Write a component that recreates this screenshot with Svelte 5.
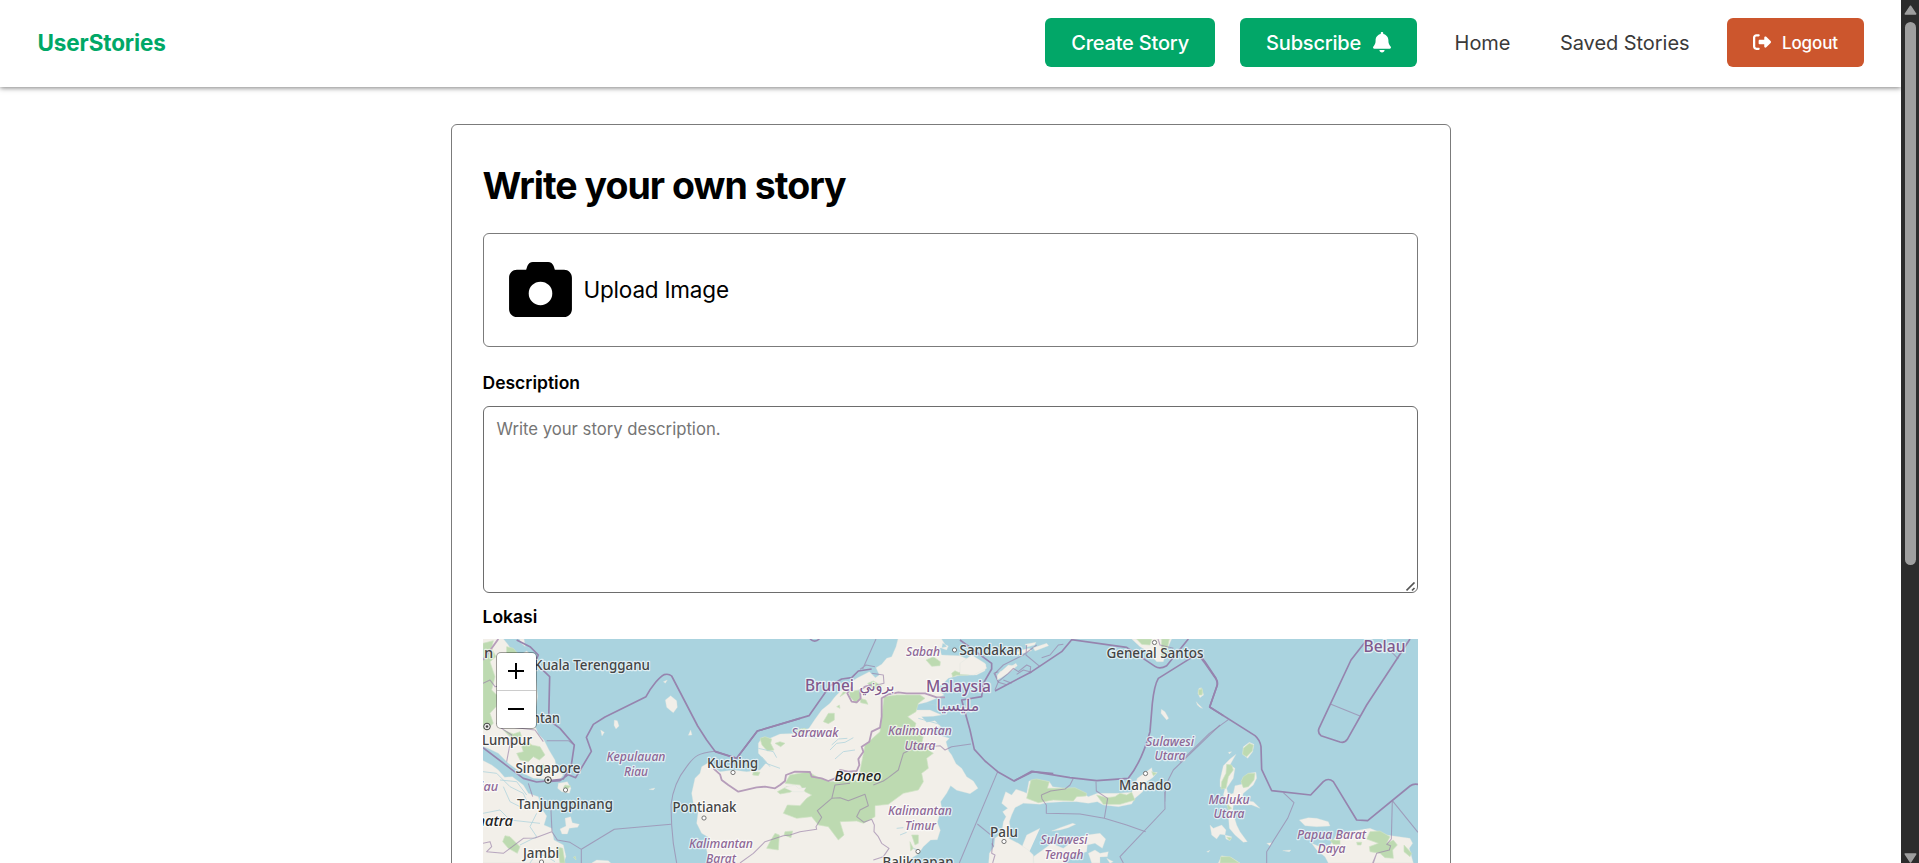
<script>
  const cities = [
    ['n', 484, 657.5, 0, 'start'], ['Kuala Terengganu', 534, 670, 116, 'start'], ['Kuantan', 560, 723, 51, 'end'],
    ['Lumpur', 482, 745, 50, 'start'], ['Singapore', 515.5, 772.5, 65, 'start'], ['Tanjungpinang', 517, 808.5, 96, 'start'],
    ['Jambi', 523, 858, 36, 'start'], ['Kuching', 707, 767.5, 51, 'start'], ['Pontianak', 672.5, 812, 64, 'start'],
    ['Sandakan', 959.5, 655, 63, 'start'], ['Balikpapan', 882.5, 867, 71, 'start'], ['General Santos', 1106.5, 658, 97, 'start'],
    ['Manado', 1119, 790, 52.5, 'start'], ['Palu', 990, 837, 28, 'start']
  ];
  const regions = [
    ['Kepulauan', 636, 761, 59], ['Riau', 636, 776, 24], ['iau', 489, 791, 18], ['Sarawak', 815, 737, 47], ['Sabah', 923, 655.5, 34],
    ['Kalimantan', 920, 735, 64], ['Utara', 920, 750, 31], ['Kalimantan', 920, 815, 64], ['Timur', 920.5, 829.5, 31],
    ['Kalimantan', 721, 848, 64], ['Barat', 721, 863, 30], ['Sulawesi', 1170, 745.5, 48], ['Utara', 1170, 760, 31],
    ['Sulawesi', 1064, 843.5, 47], ['Tengah', 1064, 858.5, 39], ['Maluku', 1229, 803.5, 41], ['Utara', 1229, 818, 31],
    ['Papua Barat', 1331.5, 838.5, 69], ['Daya', 1331.5, 853, 28]
  ];
  const countries = [
    ['Brunei', 829.5, 691, 49], ['بروني', 877, 691, 35], ['Malaysia', 958.5, 692, 65], ['مليسيا', 958, 711, 43], ['Belau', 1384.5, 651.5, 42]
  ];
  const dots = [[565.5, 790], [733, 772.5], [704, 818], [541.5, 862], [954.5, 650], [918, 851.5], [1154.5, 642.5], [1145.5, 773.5], [1004, 841.5]];
</script>

<div class="page">
  <div class="content">
    <header>
      <a class="brand" href="#/">UserStories</a>
      <nav>
        <button class="btn create">Create Story</button>
        <button class="btn subscribe">Subscribe
          <svg viewBox="0 0 448 512" width="18" height="20.5"><path fill="currentColor" d="M224 0c-17.700 0-32 14.300-32 32v19.200C119 66 64 130.600 64 208v18.800c0 47-17.300 92.400-48.500 127.600l-7.400 8.300c-8.400 9.400-10.400 22.900-5.300 34.400S19.400 416 32 416h384c12.600 0 24-7.400 29.200-18.900s3.100-25-5.300-34.400l-7.400-8.300C401.300 319.200 384 273.900 384 226.800V208c0-77.400-55-142-128-156.800V32c0-17.700-14.300-32-32-32zm45.300 493.300c12-12 18.700-28.300 18.700-45.300H160c0 17 6.700 33.300 18.700 45.300S207 512 224 512s33.300-6.700 45.300-18.700z"/></svg>
        </button>
        <a class="link home" href="#/">Home</a>
        <a class="link saved" href="#/saved">Saved Stories</a>
        <button class="btn logout">
          <svg viewBox="0 0 512 512" width="18" height="18"><path fill="currentColor" d="M377.900 105.900 500.700 228.700c7.200 7.200 11.300 17.100 11.300 27.300s-4.100 20.100-11.300 27.300L377.900 406.100c-6.400 6.400-15 9.900-24 9.900-18.700 0-33.900-15.200-33.900-33.900V320H192c-17.700 0-32-14.300-32-32v-64c0-17.700 14.300-32 32-32h128v-62.100c0-18.700 15.200-33.900 33.900-33.900 9 0 17.600 3.600 24 9.900zM160 96H96c-17.700 0-32 14.300-32 32v256c0 17.700 14.300 32 32 32h64c17.700 0 32 14.300 32 32s-14.300 32-32 32H96c-53 0-96-43-96-96V128C0 75 43 32 96 32h64c17.700 0 32 14.300 32 32s-14.300 32-32 32z"/></svg>
          Logout
        </button>
      </nav>
    </header>

    <main>
      <h1>Write your own story</h1>
      <button class="upload">
        <svg viewBox="0 0 512 448" width="63" height="55"><path fill-rule="evenodd" d="M149 33 139 64H64C29 64 0 93 0 128v256c0 35 29 64 64 64h384c35 0 64-29 64-64V128c0-35-29-64-64-64h-75l-10-31C356 13 338 0 318 0H194c-20 0-38 13-45 33zM256 160a96 96 0 1 1 0 192 96 96 0 1 1 0-192z"/></svg>
        <span>Upload Image</span>
      </button>
      <label class="desc" for="description">Description</label>
      <div class="field">
        <textarea id="description" placeholder="Write your story description."></textarea>
        <svg class="grip" viewBox="0 0 10 10" width="10" height="10"><path d="M.5 8.500 8.500.5M6 8.500l2.500-2.500" stroke="#555" stroke-width="1.700"/></svg>
      </div>
      <span class="label">Lokasi</span>
      <div class="map">
        <svg class="tiles" viewBox="483 639 935 224" width="935" height="224">
          <rect x="483" y="639" width="935" height="224" fill="#aad3df"/>
          <!-- Malay peninsula, Sumatra and the Riau islands -->
          <g transform="translate(480 580) scale(.33333)">
            <path class="land" d="M0 170H65L85 195 98 215 120 225 140 213 160 230 168 300 173 350 168 380 166 440 175 462 192 480 207 510 225 540 230 570 250 585 240 597 215 603 190 597 160 595 120 575 85 550 55 520 30 508 0 495ZM0 537 35 555 55 570 74 592 97 590 130 615 145 640 175 650 184 685 200 708 192 735 215 745 222 780 250 795 258 830 250 849H0ZM235 610 262 605 273 625 268 640 245 635 233 625ZM255 715 272 710 277 728 298 733 293 742 268 745 262 762 246 762 240 747 258 738ZM556 360 572 347 590 362 592 382 580 398 572 392 560 382ZM403 420 412 422 417 438 408 447 402 436ZM362 450 373 457 366 468ZM632 450 636 465 625 466ZM335 849 350 840 385 842 392 849ZM550 305 562 300 556 310ZM507 628 525 624 520 630ZM380 540 395 532 388 545ZM118 177 132 177 136 200 124 190Z"/>
            <path class="wood" d="M9 190 40 182 35 205 48 230 30 245 45 290 35 330 50 345 48 380 30 400 40 430 20 450 9 445ZM80 200 100 205 125 235 142 225 155 265 150 320 162 360 158 430 140 420 120 300 80 240ZM70 450 100 462 120 455 125 470 95 475ZM125 500 145 485 155 495 180 500 195 525 178 540 160 530 145 545 120 540 110 520 130 515ZM175 560 190 552 200 568 185 575ZM75 767 90 770 120 800 112 820 85 805 68 785ZM230 800 248 805 255 849 240 849ZM255 615 272 618 264 626 250 624ZM280 832 286 829 288 840Z"/>
            <path class="river" d="M9 575 50 580 90 620 130 640 150 685M60 600 110 605 140 645M70 620 90 665 120 680M170 700 150 740 170 770 120 795M9 700 60 690 90 720 180 730M150 849 170 820 195 827 225 845"/>
            <path class="state" d="M9 310 30 300 45 320 70 315M70 400 65 445 95 465 80 545M50 430 80 440 165 450 190 485M200 482H265L283 495M145 610 158 650M212 672 216 755 232 780 270 787 304 808M304 849V808L403 748 573 733M9 790 30 785 35 800 20 815 70 820 130 775 165 774 215 755M575 735 580 790 590 849"/>
            <path class="border" d="M110 180 150 200 175 225 165 248 209 290 206 420 240 445 283 495 274 555 250 597 210 602 170 606 130 595 9 503M210 604 240 602 265 584 287 593 334 514 319 472 340 433 375 411 498 350C515 318 540 289 552 284Q566 280 575 288L653 438 680 480 705 514 770 535 832 453 960 415"/>
            <path class="state" stroke-width="4" d="M705 514C655 520 645 525 620 560Q580 610 573 675L575 735"/>
            <path class="coastborder" d="M55 177 35 205 9 240"/>
          </g>
          <!-- Borneo -->
          <g transform="translate(740 635) scale(.33333)">
            <path class="land" d="M475 8 468 35 455 65 440 70 425 88 408 98 418 120 406 128 388 110 350 130 325 148 310 160 285 185 270 205 245 225 225 253 207 280 180 295 120 297 90 310 66 308 55 325 55 355 80 382 60 405 20 410-20 405-60 410-80 395-90 380-115 395-120 415-135 430-145 475-140 505-125 525-130 565-115 595-90 610-100 645-90 700H500L510 672 535 657 550 635 572 615 592 614 601 586 592 562 605 520 602 500 620 475 632 452 650 466 690 476 714 460 700 438 680 425 665 400 648 386 635 360 626 348 618 320 628 310 595 300 570 282 603 275 585 257 560 262 545 245 580 244 605 240 570 225 530 225 525 210 560 202 590 190 612 180 590 160 610 145 625 130 660 121 710 120 735 107 738 88 720 82 690 76 660 62 605 60 598 40 620 35 602 8ZM608 25 625 33 620 45 605 40ZM780 110 800 102 828 85 832 92 805 115 780 130 772 125ZM822 55 845 45 868 40 875 47 840 58ZM855 28 888 22 884 30 862 36ZM850 690 840 650 860 600 900 580"/>
            <path class="wood" d="M432 185 470 180 540 180 555 190 535 205 528 230 503 245 528 265 520 290 550 305 545 325 565 345 580 355 560 370 565 400 545 415 550 440 535 465 490 475 445 508 405 512 405 545 370 565 350 558 300 560 312 600 295 615 265 575 235 570 215 545 170 550 130 535 142 510 180 512 200 490 215 480 195 470 180 450 135 445 150 420 205 410 230 425 270 440 355 435 375 330 420 290ZM328 170 358 165 362 190 348 205 330 185ZM383 145 400 138 425 152 400 165ZM360 190 378 195 384 208 362 203ZM558 75 580 65 601 80 600 92 575 94ZM635 115 645 107 655 112 688 113 686 120 650 121 638 126ZM250 260 265 235 283 235 283 255 265 266ZM165 285 195 280 205 287 185 295ZM60 310 75 305 95 312 92 325 102 345 82 348 66 330ZM105 325 120 320 135 325 122 335ZM112 470 140 455 165 462 150 472 120 477ZM80 640 90 620 105 595 118 600 115 645ZM135 590 158 588 153 608 132 600ZM40 410 60 412 55 422 38 420ZM515 600 535 600 535 625 525 630ZM560 570 575 573 562 582ZM510 620 520 640 512 648ZM310 170 320 172 300 185ZM290 215 298 210 300 220Z"/>
            <path class="land" d="M132 458 165 450 175 460 198 458 190 470 160 470Z"/>
            <path class="river" d="M270 345 290 325 315 322 340 308M275 330 295 312 322 310M285 372 310 350 345 345M55 340 100 350 110 368M65 365 90 395M535 250 600 268M560 205 595 212M470 580 490 578M480 600 500 592M120 400 70 382M170 292 230 310M545 650 520 640"/>
            <path class="state" d="M275 492 285 450 330 445M400 450 430 438 445 428 475 405 490 355 520 340 600 332 615 345 635 335 693 327M275 490 300 488 325 497 375 478 385 512 360 525 350 545 372 562 395 553 403 570 402 590 415 605 425 625 447 640 430 665 400 675M0 684 40 655 75 620 130 602 150 600 180 590 230 583 228 575 245 547 232 527 275 490M773 410 658 684M712 567 755 602M800 149 775 142 762 115 775 110M755 655 765 640 755 625M830 118 850 105 875 112"/>
            <path class="state" stroke-width="4" d="M408 12 368 102M405 95 378 90 360 103M765 165 775 140 765 115 790 90 850 60 890 30M815 145 790 135M860 30 858 60 900 95M395 115 430 120 432 145 410 150"/>
            <path class="border" d="M-75 350-10 370 52 288 207 242 270 152 305 132 335 128 355 108 395 102M660 15 755 85V102L730 145 725 185 665 195 690 285 703 343 735 378 773 410 822 438 878 410 940 416M210 12Q224 25 238 12"/>
            <path class="coastborder" d="M-80 400-60 418-55 435-35 450-5 470 50 457 75 455 105 460 120 450 135 438 138 420 165 410 210 411 215 425 245 430 265 438 285 430 300 405 325 410 350 408 358 390 355 372 370 350 365 335 388 320 395 290 420 278 425 245 425 190 445 178 475 172 500 175 555 175 590 187 615 187M335 155 322 175 335 200 350 202 362 190 360 165 375 155 395 150"/>
          </g>
          <!-- Sulawesi and Mindanao -->
          <g transform="translate(960 635) scale(.33333)">
            <path class="land" d="M125 505 137 470 155 480 168 463 190 470 200 475 207 438 235 435 268 440 278 455 330 462 360 468 385 485 412 475 470 475 515 472 524 450 532 430 553 415 575 398 578 413 592 412 578 428 560 440 548 470 525 490 515 507 475 515 430 510 412 500 385 505 350 500 310 500 260 503 240 508 190 505 165 518 155 540 148 560 152 590 146 610 175 625 205 645 220 660 222 700H85L88 655 102 635 105 610 125 595 130 560 138 545 128 530 143 520ZM220 665 255 640 275 625 310 640 350 610 380 600 420 595 437 612 427 640 405 625 382 630 380 650 330 665 310 684 220 690ZM275 588 300 578 338 565 347 568 325 578 300 585ZM385 655 405 645 420 655 445 650 442 665 420 666 420 684H395ZM515 12 540 35 565 50 590 80 610 80 618 50 635 12ZM604 223 615 230 626 250 620 255 603 235ZM717 160 724 158 731 180 722 185 714 175ZM709 200 724 220 712 210ZM440 670 460 680 450 685ZM0 85 35 60 75 85 80 100 40 120 0 118ZM112 120 145 90 168 93 158 105 112 135ZM220 38 260 25 266 32 225 48Z"/>
            <path class="wood" d="M213 435 230 432 268 440 262 460 305 460 345 458 380 475 378 483 350 485 340 498 280 495 235 503 200 490ZM410 480 440 488 465 485 480 475 500 480 515 472 525 495 480 508 430 508ZM530 12 545 28 570 30 575 12ZM605 12 628 12 618 60 604 70ZM717 162 725 160 729 178 718 180ZM575 410 590 415 580 422Z"/>
            <path class="state" d="M244 480 272 468 315 462 330 450 340 430M244 480 246 492 259 510V535L360 537 433 550 500 570 557 590M408 440 409 468 443 490 433 550M614 470 615 522 480 665 490 684M615 500 617 450 640 405 780 270M100 600 95 655 105 660 98 684M210 115 212 95 200 90 175 110 160 100 145 115 115 140M245 68 270 60 295 30 310 28M590 0 600 30 640 40"/>
            <path class="border" d="M105 168 215 110 305 50 335 14 500 37 585 94Q600 104 620 92L685 12M715 55 595 130Q583 150 577 205L570 290Q545 380 505 430L410 437 330 428 215 409 162 438M720 65 735 85 768 132Q774 145 770 155L749 216 790 242"/>
          </g>
          <!-- Maluku and western Papua -->
          <g transform="translate(1180 635) scale(.33333)">
            <path class="land" d="M190 335 208 322 222 328 218 350 203 370 188 358ZM168 358 150 372 130 392 120 435 120 455 135 460 130 480 150 520 145 540 148 580 165 600 190 622 202 620 180 590 170 570 158 530 160 510 215 510 240 520 220 500 185 495 190 475 220 450 230 430 228 412 205 415 190 430 185 448 165 452 160 475 145 480 140 460 160 430 165 400 150 390ZM90 570 100 580 125 570 138 585 135 600 120 598 110 612 95 600ZM115 684 125 662 155 668 180 684ZM358 555 385 548 410 550 445 560 450 573 410 575 375 572ZM395 625 420 635 450 630 470 600 520 588 570 580 620 600 690 610 698 625 688 640 700 684H445L435 665 410 645ZM308 647 333 645 328 650ZM260 625 275 623 270 632ZM52 205 68 220 58 215ZM60 160 69 180 60 188 54 175ZM145 352 155 350 148 357ZM135 600 155 605 150 617 138 612ZM80 650 90 646 85 652Z"/>
            <path class="wood" d="M190 340 208 325 220 330 217 348 200 365 188 358ZM140 388 155 390 160 405 145 425 138 460 123 462 125 440 138 415ZM190 425 205 415 225 415 222 435 205 455 190 458 183 440ZM120 684 122 665 150 665 178 684ZM140 606 155 609 148 616ZM55 165 67 162 66 180 56 180ZM570 590 600 588 630 605 620 625 640 615 652 630 638 645 640 670 615 668 600 655 570 650 568 635 595 625 560 612ZM672 630 695 655 690 665 672 650ZM530 622 545 622 543 630 532 630ZM450 615 480 615 480 628 460 628ZM140 505 155 520 145 525Z"/>
            <path class="state" d="M145 254 88 295 0 382M310 473 342 503 323 550 260 650V684M453 208 540 243M634 50 655 72M637 497 634 612 620 628 632 632 628 645 590 655 578 684M637 497 714 592M590 655 580 684"/>
            <path class="border" d="M55 55 75 80 108 130Q114 140 112 150L89 216 225 302Q240 315 243 335L245 403 275 467 392 480 430 440Q445 427 460 440L530 555 563 557 690 453Q700 445 714 448M560 15 513 75 417 280Q412 293 423 302L480 321Q494 325 502 313L560 210 690 12"/>
          </g>
          {#each dots as [x, y]}
            <circle cx={x} cy={y} r="2.100" fill="#fff" stroke="#666" stroke-width=".9"/>
          {/each}
          {#each [[487, 726.5], [548, 780]] as [x, y]}
            <circle cx={x} cy={y} r="3.300" fill="#eee" stroke="#444"/><circle cx={x} cy={y} r="1.300" fill="#444"/>
          {/each}
          {#each cities as [name, x, y, w, anchor]}
            <text class="city" {x} {y} text-anchor={anchor} textLength={w || undefined} lengthAdjust="spacingAndGlyphs">{name}</text>
          {/each}
          {#each regions as [name, x, y, w]}
            <text class="region" {x} {y} textLength={w} lengthAdjust="spacingAndGlyphs">{name}</text>
          {/each}
          {#each countries as [name, x, y, w]}
            <text class="country" {x} {y} textLength={w} lengthAdjust="spacingAndGlyphs">{name}</text>
          {/each}
          <text class="island" x="834.5" y="780.500" textLength="47" lengthAdjust="spacingAndGlyphs">Borneo</text>
          <text class="island" x="513" y="826" text-anchor="end">Sumatra</text>
        </svg>
        <div class="zoom">
          <button aria-label="Zoom in"><svg viewBox="0 0 16 16" width="16" height="16"><path d="M0 8H16M8 0V16" stroke="#000" stroke-width="2"/></svg></button>
          <button aria-label="Zoom out"><svg viewBox="0 0 16 16" width="16" height="16"><path d="M0 8H16" stroke="#000" stroke-width="2"/></svg></button>
        </div>
      </div>
    </main>
  </div>

  <aside class="scrollbar">
    <svg width="13" height="10" viewBox="0 0 13 10"><path d="M6.500 1.200 11.700 9H1.300Z" fill="#9f9f9f" stroke="#9f9f9f" stroke-width="1.500" stroke-linejoin="round"/></svg>
    <div class="thumb"></div>
    <svg width="13" height="10" viewBox="0 0 13 10"><path d="M1.300 1H11.700L6.500 9Z" fill="#9f9f9f" stroke="#9f9f9f" stroke-width="1.500" stroke-linejoin="round"/></svg>
  </aside>
</div>

<style>
  :global(body) { margin: 0; overflow: hidden; }
  * { box-sizing: border-box; }
  .page { display: flex; height: 863px; overflow: hidden; font-family: Inter, sans-serif; background: #fff; color: #000; }
  .content { flex: 1; min-width: 0; }
  header { display: flex; justify-content: space-between; align-items: flex-start; height: 87px; padding: 18px 37px 0; box-shadow: 0 1px 5px rgba(0, 0, 0, .5); }
  a { text-decoration: none; }
  button { font-family: inherit; margin: 0; padding: 0; border: 0; }
  .brand { color: #00a867; font-weight: 700; font-size: 22.500px; line-height: 50px; letter-spacing: -.12px; padding-left: .5px; }
  nav { display: flex; }
  .btn { display: flex; align-items: center; justify-content: center; height: 49px; border-radius: 6px; color: #fff; background: #02a768; font-size: 20px; font-weight: 500; letter-spacing: -.2px; }
  .create { width: 170px; margin-right: 25px; padding-left: 1px; }
  .subscribe { width: 177px; gap: 12px; padding-left: 1px; }
  .link { color: #3a3a3a; font-size: 20px; line-height: 50px; letter-spacing: -.05px; }
  .home { margin-left: 38px; }
  .saved { margin-left: 49.500px; }
  .logout { width: 137px; margin-left: 37.500px; background: #cc562d; font-size: 17px; gap: 11px; letter-spacing: -.1px; }
  .logout svg { position: relative; top: -1px; }
  main { width: 1000px; height: 900px; margin: 37px auto 0; padding: 31px 32px 32px 31px; border: 1px solid #7b7b7b; border-radius: 6px; }
  h1 { margin: 7px 0 0; font-size: 37.500px; line-height: 45px; font-weight: 700; letter-spacing: -.98px; }
  .upload { display: flex; align-items: center; gap: 12px; width: 100%; height: 114px; margin-top: 25px; padding: 0 25px 2px; border: 1px solid #7b7b7b; border-radius: 6px; background: #fff; color: #000; font-size: 22.500px; letter-spacing: -.2px; }
  .desc, .label { display: block; font-weight: 600; font-size: 17.500px; line-height: 24px; }
  .desc { margin-top: 24px; }
  .field { position: relative; height: 187px; margin-top: 11px; }
  textarea { display: block; width: 100%; height: 187px; resize: none; border: 1px solid #6d6d6d; border-radius: 6px; padding: 12px 12px 12px 13px; font: 400 16.700px/21px Inter, sans-serif; background: #fff; outline: 0; }
  textarea::placeholder { color: #757575; }
  .grip { position: absolute; right: 2px; bottom: 1px; }
  .label { margin-top: 12px; }
  .map { position: relative; width: 100%; height: 261px; margin-top: 10px; overflow: hidden; background: #aad3df; }
  .tiles { display: block; }
  .zoom { position: absolute; left: 13px; top: 13px; width: 41px; border: 1.500px solid rgba(0, 0, 0, .35); border-radius: 5px; background: #fff; background-clip: padding-box; }
  .zoom button { display: flex; align-items: center; justify-content: center; width: 100%; height: 37.500px; background: none; }
  .zoom button:first-child { border-bottom: 1px solid #ccc; }
  .scrollbar { display: flex; flex-direction: column; align-items: center; width: 18px; padding: 5px 0 0; background: #2c2c2c; }
  .scrollbar svg { flex: none; }
  .thumb { width: 11px; height: 543px; margin: 7px 0 288px; border-radius: 6px; background: #9f9f9f; flex: none; }
  .land { fill: #f2efe9; stroke: #dce3df; stroke-width: 1; stroke-linejoin: round; }
  .wood { fill: #bddab1; stroke: #cfe2c4; stroke-width: 2; stroke-linejoin: round; }
  .river { fill: none; stroke: #b3d5dd; stroke-width: 2.500; stroke-linejoin: round; }
  .state { fill: none; stroke: #987fa8; stroke-opacity: .65; stroke-width: 3.200; stroke-linejoin: round; }
  .border { fill: none; stroke: #9684ae; stroke-width: 5; stroke-linejoin: round; }
  .coastborder { fill: none; stroke: #b69dba; stroke-width: 5.500; stroke-linejoin: round; }
  .tiles text { font-family: "Noto Sans", "DejaVu Sans", sans-serif; paint-order: stroke; stroke: rgba(255, 255, 255, .65); stroke-width: 2.500px; stroke-linejoin: round; }
  .city { font-size: 14.800px; font-weight: 500; fill: #444; }
  .region { font-size: 13.300px; font-style: italic; font-weight: 500; text-anchor: middle; fill: #8d6796; }
  .country { font-size: 15.500px; font-weight: 500; text-anchor: middle; fill: #80588c; }
  .tiles .island { font-size: 14.800px; font-style: italic; font-weight: 500; fill: #222; }
</style>
